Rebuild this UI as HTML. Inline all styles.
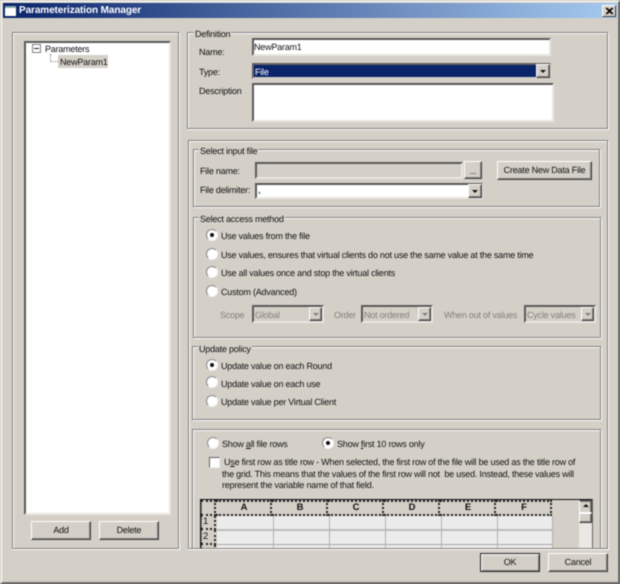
<!DOCTYPE html>
<html><head><meta charset="utf-8"><style>
html,body{margin:0;padding:0;background:#d4d0c8}
#w{position:relative;width:620px;height:584px;overflow:hidden;background:#d4d0c8;font-family:"Liberation Sans",sans-serif;font-size:9px;color:#111;filter:blur(.4px);text-rendering:geometricPrecision}
#w div{position:absolute;box-sizing:border-box}
.t{white-space:nowrap;line-height:12px;height:12px;letter-spacing:-.22px}
.bt{letter-spacing:-.22px}
.d{color:#808078}
.eg{border:1px solid #808080;box-shadow:1px 1px 0 #fff,inset 1px 1px 0 #fff}
.leg{background:#d4d0c8;padding:0 1px 0 1px}
.sk{border:2px solid;border-color:#5a5a5a #e8e6e0 #e8e6e0 #5a5a5a;background:#fff}
.bt{background:#d4d0c8;border:1px solid;border-color:#fff #404040 #404040 #fff;box-shadow:inset -1px -1px 0 #808080;text-align:center;line-height:17px}
.r{width:12px;height:12px;border-radius:50%;border:1px solid;border-color:#8a8a8a #f4f4f4 #f4f4f4 #8a8a8a;background:#fff}
.r.on::after{content:"";position:absolute;left:3px;top:3px;width:4px;height:4px;border-radius:50%;background:#111}
.ar::after{content:"";position:absolute;left:50%;top:50%;margin:-1px 0 0 -3px;border:3px solid transparent;border-top:3px solid #111;border-bottom:0}
.ar.g::after{border-top-color:#808078}
.h{background:#d4d0c8;text-align:center;font-weight:bold;line-height:12px;height:16px;top:500px;width:56px;padding-left:2px;border-right:2px dotted #222;border-bottom:2px dotted #222;border-top:2px dotted #222;font-size:9.5px}
</style></head><body><div id="w">
<div style="left:0;top:0;width:620px;height:584px;border:1px solid #d4d0c8;border-right-color:#404040;border-bottom-color:#404040;box-shadow:inset 1px 1px 0 #fff,inset -1px -1px 0 #808080"></div>

<div style="left:3px;top:3px;width:614px;height:15px;background:linear-gradient(90deg,#0a246a,#a6caf0)"></div>
<div style="left:5px;top:6px;width:11px;height:10px;background:#fff;border-top:2px solid #8aa"></div>
<div class="t" style="left:19px;top:5px;color:#fff;font-weight:bold;font-size:10px;letter-spacing:-.1px">Parameterization Manager</div>
<div style="left:602px;top:5px;width:14px;height:12px;background:#d4d0c8;border:1px solid;border-color:#fff #404040 #404040 #fff"><svg width="12" height="10" style="position:absolute;left:0;top:0"><path d="M3 2L9 8M4 2L10 8M9 2L3 8M10 2L4 8" stroke="#000" stroke-width="1" fill="none"/></svg></div>

<!-- left panel -->
<div class="eg" style="left:12px;top:32px;width:167px;height:517px"></div>
<div class="sk" style="left:24px;top:41px;width:147px;height:474px"></div>
<div style="left:32px;top:44px;width:9px;height:9px;border:1px solid #808080;background:#fff"></div>
<div style="left:34px;top:48px;width:5px;height:1px;background:#222"></div>
<div style="left:50px;top:54px;height:8px;width:8px;border-left:1px dotted #808080;border-bottom:1px dotted #808080"></div>
<div class="t" style="left:45px;top:43px">Parameters</div>
<div style="left:58px;top:55px;width:50px;height:13px;background:#d4d0c8"></div>
<div class="t" style="left:60px;top:56px">NewParam1</div>
<div class="bt" style="left:31px;top:521px;width:60px;height:19px">Add</div>
<div class="bt" style="left:99px;top:521px;width:60px;height:19px">Delete</div>

<!-- definition -->
<div class="eg" style="left:187px;top:32px;width:421px;height:97px"></div>
<div class="t leg" style="left:194px;top:28px">Definition</div>
<div class="t" style="left:199px;top:46px">Name:</div>
<div class="t" style="left:199px;top:66px">Type:</div>
<div class="t" style="left:199px;top:85px">Description</div>
<div class="sk" style="left:252px;top:38px;width:299px;height:18px"></div>
<div class="t" style="left:254px;top:41px">NewParam1</div>
<div class="sk" style="left:252px;top:63px;width:299px;height:16px;background:#0a246a;border-color:#606060 #d4d0c8 #d4d0c8 #606060"></div>
<div class="t" style="left:255px;top:66px;color:#fff">File</div>
<div class="bt ar" style="left:536px;top:64px;width:14px;height:14px"></div>
<div class="sk" style="left:252px;top:83px;width:302px;height:39px"></div>

<!-- scroll panel -->
<div class="eg" style="left:188px;top:140px;width:420px;height:409px"></div>

<!-- input file -->
<div class="eg" style="left:193px;top:149px;width:407px;height:58px"></div>
<div class="t leg" style="left:199px;top:145px">Select input file</div>
<div class="t" style="left:200px;top:165px">File name:</div>
<div class="t" style="left:200px;top:184px">File delimiter:</div>
<div class="sk" style="left:255px;top:162px;width:208px;height:17px;background:#d4d0c8"></div>
<div class="bt" style="left:464px;top:161px;width:18px;height:18px;line-height:19px">...</div>
<div class="bt" style="left:497px;top:161px;width:95px;height:19px">Create New Data File</div>
<div class="sk" style="left:255px;top:183px;width:228px;height:16px"></div>
<div class="t" style="left:258px;top:185px;font-size:10px;color:#000">,</div>
<div class="bt ar" style="left:468px;top:184px;width:14px;height:14px"></div>

<!-- access -->
<div class="eg" style="left:193px;top:217px;width:408px;height:121px"></div>
<div class="t leg" style="left:199px;top:213px">Select access method</div>
<div class="r on" style="left:206px;top:229px"></div><div class="t" style="left:221px;top:230px">Use values from the file</div>
<div class="r" style="left:206px;top:248px"></div><div class="t" style="left:221px;top:249px">Use values, ensures that virtual clients do not use the same value at the same time</div>
<div class="r" style="left:206px;top:266px"></div><div class="t" style="left:221px;top:267px">Use all values once and stop the virtual clients</div>
<div class="r" style="left:206px;top:285px"></div><div class="t" style="left:221px;top:286px">Custom (Advanced)</div>
<div class="t d" style="left:220px;top:309px">Scope</div>
<div class="sk" style="left:252px;top:305px;width:72px;height:18px;background:#d4d0c8"></div>
<div class="t d" style="left:255px;top:309px">Global</div>
<div class="bt ar g" style="left:309px;top:307px;width:13px;height:14px"></div>
<div class="t d" style="left:334px;top:309px">Order</div>
<div class="sk" style="left:361px;top:305px;width:72px;height:18px;background:#d4d0c8"></div>
<div class="t d" style="left:364px;top:309px">Not ordered</div>
<div class="bt ar g" style="left:418px;top:307px;width:13px;height:14px"></div>
<div class="t d" style="left:444px;top:309px">When out of values</div>
<div class="sk" style="left:524px;top:305px;width:72px;height:18px;background:#d4d0c8"></div>
<div class="t d" style="left:527px;top:309px">Cycle values</div>
<div class="bt ar g" style="left:581px;top:307px;width:13px;height:14px"></div>

<!-- update -->
<div class="eg" style="left:192px;top:346px;width:409px;height:74px"></div>
<div class="t leg" style="left:198px;top:343px">Update policy</div>
<div class="r on" style="left:206px;top:359px"></div><div class="t" style="left:221px;top:360px">Update value on each Round</div>
<div class="r" style="left:206px;top:376px"></div><div class="t" style="left:221px;top:378px">Update value on each use</div>
<div class="r" style="left:206px;top:395px"></div><div class="t" style="left:221px;top:396px">Update value per Virtual Client</div>

<!-- rows -->
<div class="eg" style="left:192px;top:429px;width:409px;height:130px"></div>
<div class="r" style="left:207px;top:437px"></div><div class="t" style="left:222px;top:438px">Show <u>a</u>ll file rows</div>
<div class="r on" style="left:322px;top:437px"></div><div class="t" style="left:337px;top:438px">Show <u>f</u>irst 10 rows only</div>
<div class="r" style="left:209px;top:457px;width:11px;height:11px;border-radius:0;border-color:#606060 #f0f0f0 #f0f0f0 #606060"></div>
<div class="t" style="left:224px;top:456px">U<u>s</u>e first row as title row - When selected, the first row of the file will be used as the title row of</div>
<div class="t" style="left:222px;top:468px">the grid. This means that the values of the first row will not&nbsp; be used. Instead, these values will</div>
<div class="t" style="left:222px;top:479px">represent the variable name of that field.</div>

<!-- grid -->
<div style="left:200px;top:499px;width:393px;height:1px;background:#111"></div>
<div style="left:200px;top:499px;width:1px;height:49px;background:#111"></div>
<div style="left:592px;top:499px;width:1px;height:49px;background:#666"></div>
<div style="left:201px;top:500px;width:15px;height:16px;border:1px dotted #222;border-width:2px 2px 2px 1px"></div>
<div class="h" style="left:216px">A</div>
<div class="h" style="left:272px">B</div>
<div class="h" style="left:328px">C</div>
<div class="h" style="left:384px">D</div>
<div class="h" style="left:440px">E</div>
<div class="h" style="left:496px">F</div>
<div style="left:201px;top:516px;width:15px;height:14px;border-style:dotted;border-color:#222;border-width:0 2px 2px 1px"></div>
<div style="left:201px;top:530px;width:15px;height:15px;border-style:dotted;border-color:#222;border-width:0 2px 2px 1px"></div>
<div style="left:201px;top:545px;width:15px;height:3px;border-style:dotted;border-color:#222;border-width:0 2px 0 1px"></div>
<div class="t" style="left:203px;top:516px;font-size:9.5px">1</div>
<div class="t" style="left:203px;top:531px;font-size:9.5px">2</div>
<div style="left:217px;top:516px;width:336px;height:32px;background:#ececec"></div>
<div style="left:217px;top:529px;width:336px;height:2px;background:#bcbcbc"></div>
<div style="left:217px;top:544px;width:336px;height:1px;background:#a8a8a8"></div>
<div style="left:273px;top:516px;width:1px;height:32px;background:#b0b0b0"></div>
<div style="left:329px;top:516px;width:1px;height:32px;background:#b0b0b0"></div>
<div style="left:385px;top:516px;width:1px;height:32px;background:#b0b0b0"></div>
<div style="left:441px;top:516px;width:1px;height:32px;background:#b0b0b0"></div>
<div style="left:497px;top:516px;width:1px;height:32px;background:#b0b0b0"></div>
<div style="left:552px;top:516px;width:1px;height:32px;background:#b0b0b0"></div>
<!-- scrollbar -->
<div style="left:579px;top:500px;width:13px;height:48px;background:repeating-conic-gradient(#fff 0 25%,#d4d0c8 0 50%) 0 0/2px 2px"></div>
<div class="bt ar" style="left:579px;top:500px;width:13px;height:13px;transform:scaleY(-1)"></div>
<div class="bt" style="left:579px;top:513px;width:13px;height:10px"></div>
<!-- clip below panel -->
<div style="left:12px;top:549px;width:596px;height:30px;background:#d4d0c8"></div>
<div style="left:12px;top:548px;width:167px;height:1px;background:#808080"></div>
<div style="left:188px;top:548px;width:420px;height:1px;background:#808080"></div>
<div style="left:188px;top:549px;width:421px;height:1px;background:#fff"></div>
<div style="left:12px;top:549px;width:168px;height:1px;background:#fff"></div>

<div class="bt" style="left:480px;top:553px;width:60px;height:19px;border-color:#222;box-shadow:inset 1px 1px 0 #fff,inset -1px -1px 0 #808080">OK</div>
<div class="bt" style="left:548px;top:553px;width:60px;height:19px">Cancel</div>
</div></body></html>
